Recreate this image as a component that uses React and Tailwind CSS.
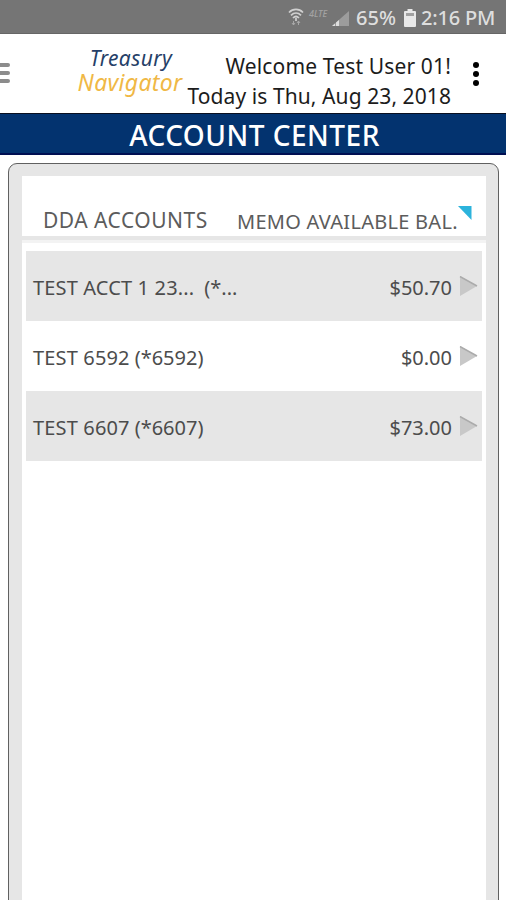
import React from 'react';

const accounts = [
  { id: 1, name: 'TEST ACCT 1 23...', mask: '(*...', balance: '$50.70', shaded: true },
  { id: 2, name: 'TEST 6592', mask: '(*6592)', balance: '$0.00', shaded: false },
  { id: 3, name: 'TEST 6607', mask: '(*6607)', balance: '$73.00', shaded: true },
];

function StatusBar() {
  return (
    <div className="h-[34px] shrink-0 bg-[#757575] border-b border-[#666666] flex items-center justify-end pr-[10px] pt-[3px] text-[20px] leading-[28px] font-medium text-[#dedede]">
      {/* Wifi */}
      <svg width="16" height="18" viewBox="0 0 16 18" className="mr-[5px] -mt-[3px]" fill="none" stroke="#d0d0d0" strokeWidth="1.7">
        <path d="M1 4.500C5 .4 11 .4 15 4.500" />
        <path d="M3 7.300c3-3 7-3 10 0" />
        <path d="M5 10c2-2 4-2 6 0" />
        <path d="M8 10v3" />
        <path d="M5.500 13v4M4 15l1.500 2L7 15M10.500 17v-4M9 15l1.500-2 1.500 2" strokeWidth="1" stroke="#a8a8a8" />
      </svg>
      <span className="text-[9px] leading-[12px] italic font-medium text-[#a3a3a3] w-[20px] mr-[3px] -mt-[9px]">4LTE</span>
      {/* Signal */}
      <svg width="18" height="16" viewBox="0 0 18 16" className="mr-[6px]">
        <path d="M0 16L17 1v15z" fill="#9c9c9c" />
        <path d="M0 16l3-2.600V16zM4 16v-3.500L7 10v6z" fill="#dedede" />
      </svg>
      <span className="w-[42px] whitespace-nowrap">65%</span>
      <svg width="12" height="18" viewBox="0 0 12 18" className="ml-[6px] mr-[5px]">
        <path d="M3.500 0h5v2H11a1 1 0 0 1 1 1v14a1 1 0 0 1-1 1H1a1 1 0 0 1-1-1V3a1 1 0 0 1 1-1h2.500z" fill="#e8e8e8" />
        <path d="M2 4h8v3H2z" fill="#a0a0a0" />
      </svg>
      <span className="w-[75px] whitespace-nowrap tracking-[-0.2px]">2:16 PM</span>
    </div>
  );
}

function Header() {
  return (
    <div className="h-[79px] shrink-0 bg-white flex">
      <div className="w-[10px] pt-[29px] flex flex-col gap-[4px]">
        <span className="h-[4px] rounded-r-full bg-[#8c8c8c]" />
        <span className="h-[4px] rounded-r-full bg-[#8c8c8c]" />
        <span className="h-[4px] rounded-r-full bg-[#8c8c8c]" />
      </div>
      <div className="ml-[67px] w-[108px] pt-[12px] flex flex-col items-center italic whitespace-nowrap">
        <span className="text-[21px] leading-[24px] tracking-[0.4px] text-[#263f68]">Treasury</span>
        <span className="mr-[2px] text-[23px] leading-[24px] tracking-[0.3px] text-[#f0b845]">Navigator</span>
      </div>
      <div className="w-[266px] pt-[17px] text-right text-[21px] leading-[30px] text-[#1c1c1c] whitespace-nowrap">
        <div className="tracking-[0.15px]">Welcome Test User 01!</div>
        <div className="tracking-[0.08px]">Today is Thu, Aug 23, 2018</div>
      </div>
      <div className="ml-[22px] pt-[28px] flex flex-col gap-[3px]">
        <span className="size-[6px] rounded-full bg-black" />
        <span className="size-[6px] rounded-full bg-black" />
        <span className="size-[6px] rounded-full bg-black" />
      </div>
    </div>
  );
}

function AccountRow({ account }) {
  return (
    <div className={`h-[70px] flex items-center pt-[3px] pl-[7px] pr-[4px] ${account.shaded ? 'bg-[#e6e6e6]' : 'bg-white'}`}>
      <span className="whitespace-pre tracking-[0.15px]">{account.name}</span>
      <span className={account.id === 1 ? 'ml-[10px]' : 'ml-[5px]'}>{account.mask}</span>
      <span className="ml-auto">{account.balance}</span>
      <svg width="19" height="20" viewBox="0 0 19 20" className="ml-[7px] -mt-[4px]">
        <path d="M1 0l17 10L1 20z" fill="#c8c8c8" />
        <path d="M1 .5l17 9.500" stroke="#ababab" strokeWidth="1.500" />
      </svg>
    </div>
  );
}

export default function App() {
  return (
    <div className="w-[506px] h-[900px] overflow-hidden bg-white flex flex-col font-['Noto_Sans',sans-serif]">
      <StatusBar />
      <Header />
      <div className="h-[42px] shrink-0 bg-[#03336f] border-t border-t-[#0a1020] border-b-2 border-b-[#000f52] flex items-center justify-center pt-[2px] pl-[3px] text-[28px] font-medium leading-[38px] text-white">
        <span className="whitespace-nowrap tracking-[0.5px]">ACCOUNT CENTER</span>
      </div>

      <div className="mt-[8px] ml-[8px] w-[491px] h-[760px] shrink-0 rounded-[9px] border border-[#606060] bg-[#e6e6e6] pt-[12px] pl-[13px] pr-[12px]">
        <div className="h-[60px] bg-white flex text-[#5c5c5c] whitespace-nowrap">
          <span className="ml-[21px] w-[194px] text-[21px] leading-[28px] pt-[30px] tracking-[0.5px]">DDA ACCOUNTS</span>
          <span className="w-[221px] text-[20px] leading-[28px] pt-[32px] tracking-[0.27px]">MEMO AVAILABLE BAL.</span>
          <svg width="14" height="14" viewBox="0 0 14 14" className="mt-[30px]">
            <path d="M0 0h13.500v14z" fill="#2cb3dc" />
          </svg>
        </div>
        <div className="h-[4px] bg-[#e6e6e6]" />
        <div className="h-[3px] bg-[#f3f3f3]" />
        <div className="h-[700px] bg-white pt-[8px] px-[4px] text-[20px] text-[#4c4c4c] whitespace-nowrap">
          {accounts.map((a) => (
            <AccountRow key={a.id} account={a} />
          ))}
        </div>
      </div>
    </div>
  );
}
